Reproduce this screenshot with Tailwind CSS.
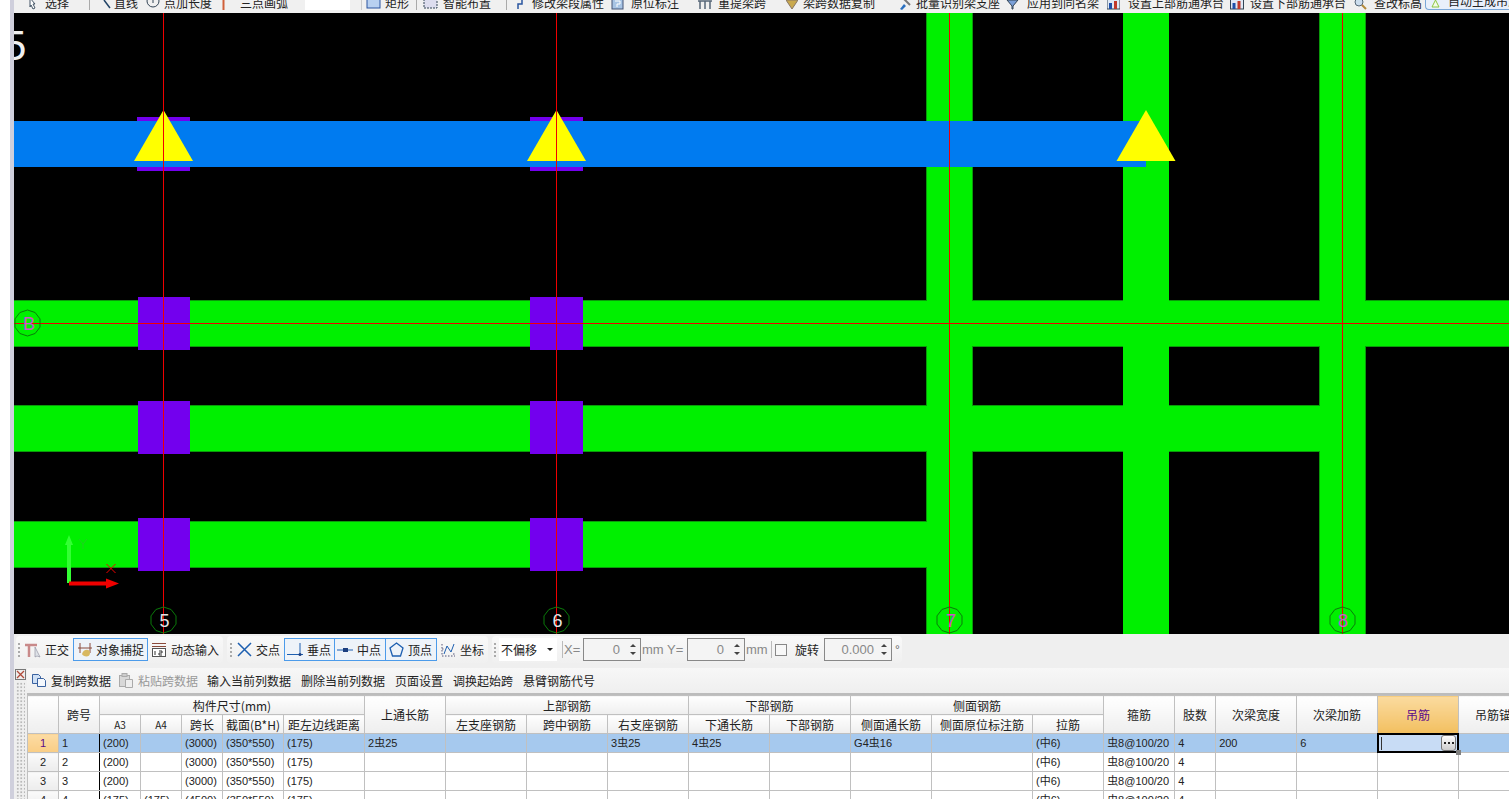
<!DOCTYPE html>
<html>
    <head>
        <meta charset="UTF-8" />
        <script src="https://cdn.jsdelivr.net/npm/@tailwindcss/browser@4"></script>
        <title>梁平法表格</title>
    </head>
    <body class="bg-white">
        <div class="flex h-[799px] w-[1509px] overflow-hidden font-['Noto_Sans_CJK_SC',sans-serif] text-[12px] leading-[14px] text-[#222]">
            <div class="w-[10px] shrink-0 bg-white"></div>
            <div class="w-[4px] shrink-0 bg-[#cfcfdc]"></div>

            <div class="flex min-w-0 flex-1 flex-col">
                <!-- top toolbar, cut off by the window -->
                <div class="flex h-[13px] shrink-0 items-end overflow-hidden whitespace-nowrap bg-[#f0f0f0] pb-[3px]">
                    <svg class="ml-[15px] w-[8px] h-[12px] shrink-0" viewBox="0 0 8 12"><path d="M1 0l5 6-2 0 2 4-2 1-2-4-1 2z" fill="#fff" stroke="#456" /></svg>
                    <span class="ml-[8px] w-[24px] shrink-0">选择</span>
                    <i class="ml-[20px] h-[12px] w-[1px] shrink-0 bg-[#aaa]"></i>
                    <svg class="ml-[13px] w-[8px] h-[12px] shrink-0" viewBox="0 0 8 12"><path d="M1 2l6 8" stroke="#246" stroke-width="1.5" /></svg>
                    <span class="ml-[3px] w-[24px] shrink-0">直线</span>
                    <svg class="ml-[8px] w-[14px] h-[14px] shrink-0" viewBox="0 0 14 14"><circle cx="7" cy="5" r="6" fill="none" stroke="#345" /><path d="M7 1v6" stroke="#345" /></svg>
                    <span class="ml-[4px] w-[48px] shrink-0">点加长度</span>
                    <svg class="ml-[9px] w-[5px] h-[10px] shrink-0" viewBox="0 0 5 10"><path d="M2.5 0v10" stroke="#d0603a" stroke-width="2" /></svg>
                    <span class="ml-[14px] w-[48px] shrink-0">三点画弧</span>
                    <i class="ml-[17px] h-[13px] w-[45px] shrink-0 bg-white"></i>
                    <i class="ml-[11px] h-[12px] w-[1px] shrink-0 bg-[#ccc]"></i>
                    <svg class="ml-[4px] w-[15px] h-[12px] shrink-0" viewBox="0 0 15 12"><rect x="1" y="1" width="13" height="9" fill="#b8d0f0" stroke="#2a55a0" /></svg>
                    <span class="ml-[4px] w-[24px] shrink-0">矩形</span>
                    <i class="ml-[7px] h-[12px] w-[1px] shrink-0 bg-[#aaa]"></i>
                    <svg class="ml-[6px] w-[15px] h-[12px] shrink-0" viewBox="0 0 15 12"><rect x="1" y="1" width="13" height="9" fill="#dde" stroke="#345" stroke-dasharray="2 1" /></svg>
                    <span class="ml-[5px] w-[48px] shrink-0">智能布置</span>
                    <i class="ml-[15px] h-[12px] w-[1px] shrink-0 bg-[#aaa]"></i>
                    <svg class="ml-[7px] w-[10px] h-[12px] shrink-0" viewBox="0 0 10 12"><path d="M2 1h6v5H4v5" fill="none" stroke="#2a55a0" stroke-width="1.5" /></svg>
                    <span class="ml-[8px] w-[72px] shrink-0">修改梁段属性</span>
                    <svg class="ml-[7px] w-[13px] h-[12px] shrink-0" viewBox="0 0 13 12"><rect x="1" y="0" width="11" height="11" fill="#a8c4e4" stroke="#457" /><path d="M4 3h5v3H6v3" fill="none" stroke="#fff" /></svg>
                    <span class="ml-[7px] w-[48px] shrink-0">原位标注</span>
                    <svg class="ml-[18px] w-[16px] h-[12px] shrink-0" viewBox="0 0 16 12"><path d="M1 3h14M3 3v8M8 3v8M13 3v8" fill="none" stroke="#567" stroke-width="1.5" /></svg>
                    <span class="ml-[5px] w-[48px] shrink-0">重提梁跨</span>
                    <svg class="ml-[20px] w-[12px] h-[12px] shrink-0" viewBox="0 0 12 12"><path d="M0 2h12L6 11z" fill="#c9a94e" stroke="#876" /></svg>
                    <span class="ml-[5px] w-[72px] shrink-0">梁跨数据复制</span>
                    <svg class="ml-[23px] w-[13px] h-[12px] shrink-0" viewBox="0 0 13 12"><path d="M2 11l4-5 2 2-4 4z" fill="#2a70c0" /><path d="M6 1l6 6" stroke="#777" stroke-width="2" /></svg>
                    <span class="ml-[5px] w-[84px] shrink-0">批量识别梁支座</span>
                    <svg class="ml-[6px] w-[13px] h-[12px] shrink-0" viewBox="0 0 13 12"><path d="M1 2h11L7 8v3H6V8z" fill="#7aa0d8" stroke="#345" /></svg>
                    <span class="ml-[8px] w-[72px] shrink-0">应用到同名梁</span>
                    <svg class="ml-[8px] w-[13px] h-[12px] shrink-0" viewBox="0 0 13 12"><rect x="0" y="0" width="13" height="11" fill="#dfe8f5" stroke="#345" /><rect x="2" y="5" width="3" height="6" fill="#1d4fa8" /><rect x="7" y="3" width="3" height="8" fill="#c0392b" /></svg>
                    <span class="ml-[8px] w-[96px] shrink-0">设置上部筋通承台</span>
                    <svg class="ml-[6px] w-[14px] h-[12px] shrink-0" viewBox="0 0 13 12"><rect x="0" y="0" width="13" height="11" fill="#dfe8f5" stroke="#345" /><rect x="2" y="5" width="3" height="6" fill="#1d4fa8" /><rect x="7" y="3" width="3" height="8" fill="#c0392b" /></svg>
                    <span class="ml-[6px] w-[96px] shrink-0">设置下部筋通承台</span>
                    <svg class="ml-[8px] w-[13px] h-[12px] shrink-0" viewBox="0 0 13 12"><circle cx="5" cy="4" r="4" fill="#cde" stroke="#567" /><path d="M8 7l4 4" stroke="#b58a3a" stroke-width="2" /></svg>
                    <span class="ml-[7px] w-[48px] shrink-0">查改标高</span>
                    <div class="ml-[3px] flex h-[10px] flex-1 items-end rounded-bl-sm border-b border-l border-[#7aa8d8] bg-[#e8f0fb] pb-[1px] pl-[5px]">
                        <svg class="w-[9px] h-[9px] shrink-0" viewBox="0 0 9 9"><path d="M4.5 1L8 8H1z" fill="#f4fbe8" stroke="#8cc63f" /></svg>
                        <span class="ml-[8px]">自动生成吊筋</span>
                    </div>
                </div>

                <!-- CAD drawing -->
                <svg class="h-[621px] w-[1495px] shrink-0 bg-black" viewBox="14 13 1495 621" shape-rendering="crispEdges">
                    <g fill="#00f000" stroke="#0a9a0a">
                        <rect x="926.5" y="0" width="46" height="700" />
                        <rect x="1319.5" y="0" width="46" height="700" />
                        <rect x="0" y="300.5" width="1600" height="46" />
                        <rect x="0" y="405.5" width="1320" height="46" />
                        <rect x="0" y="521.5" width="926" height="46" />
                    </g>
                    <g fill="#00f000">
                        <rect x="1123" y="13" width="46" height="621" />
                        <rect x="927" y="13" width="45" height="621" />
                        <rect x="1320" y="13" width="45" height="621" />
                        <rect x="14" y="301" width="1495" height="45" />
                        <rect x="14" y="406" width="1306" height="45" />
                        <rect x="14" y="522" width="913" height="45" />
                    </g>
                    <g fill="#7300ee">
                        <rect x="137" y="117" width="53" height="54" />
                        <rect x="530" y="117" width="53" height="54" />
                        <rect x="138" y="297" width="52" height="53" />
                        <rect x="530" y="297" width="53" height="53" />
                        <rect x="138" y="401" width="52" height="53" />
                        <rect x="530" y="401" width="53" height="53" />
                        <rect x="138" y="518" width="52" height="53" />
                        <rect x="530" y="518" width="53" height="53" />
                    </g>
                    <rect x="0" y="121" width="1146" height="46" fill="#007bf0" />
                    <g fill="#ffff00" shape-rendering="auto">
                        <path d="M163.5 110L193 161H134z" />
                        <path d="M556.5 110L586 161H527z" />
                        <path d="M1146 110L1175.500 161H1116.500z" />
                    </g>
                    <g stroke="#f00000" stroke-width="1">
                        <path d="M163.500 13V634M556.500 13V634M949.500 13V634M1342.500 13V634M14 323.500H1509" />
                    </g>
                    <g fill="none" stroke="#0a7a0a" shape-rendering="auto">
                        <path d="M163.500 607l7.600 2.500 4.900 6.400v8.200l-4.900 6.400-7.600 2.500-7.600-2.500-4.900-6.400v-8.200l4.900-6.400z" />
                        <path d="M556.500 607l7.600 2.500 4.900 6.400v8.200l-4.900 6.400-7.600 2.500-7.600-2.500-4.900-6.400v-8.200l4.900-6.400z" />
                        <path d="M949.500 607l7.600 2.500 4.900 6.400v8.200l-4.900 6.400-7.600 2.500-7.600-2.500-4.900-6.400v-8.200l4.900-6.400z" />
                        <path d="M1342.500 607l7.600 2.500 4.900 6.400v8.200l-4.900 6.400-7.600 2.500-7.600-2.500-4.900-6.400v-8.200l4.900-6.400z" />
                        <path d="M27.500 310l7.600 2.500 4.900 6.400v8.200l-4.900 6.400-7.600 2.500-7.600-2.500-4.900-6.400v-8.200l4.900-6.400z" />
                    </g>
                    <g font-family="'Liberation Sans',sans-serif" font-size="18" text-anchor="middle" shape-rendering="auto">
                        <text x="164.500" y="627" fill="#e4e4e4">5</text>
                        <text x="557.500" y="627" fill="#e4e4e4">6</text>
                        <text x="951" y="627" fill="#cc55cc">7</text>
                        <text x="1343" y="627" fill="#cc55cc">8</text>
                        <text x="29" y="330" fill="#cc55cc">B</text>
                    </g>
                    <text x="3" y="60" font-family="'Liberation Sans',sans-serif" font-size="42" fill="#f0f0f0">5</text>
                    <g shape-rendering="auto">
                        <path d="M69 583V545" stroke="#33ff33" stroke-width="4" />
                        <path d="M69 535l4 10h-8z" fill="#33ff33" />
                        <path d="M79 539l4 5 4-5M83 544v5" fill="none" stroke="#20d020" />
                        <path d="M69 583.500H107" stroke="#f00000" stroke-width="4" />
                        <path d="M119 583.500l-13 -5v10z" fill="#f00000" />
                        <path d="M106.500 564l9 9M115.500 564l-9 9" stroke="#f00000" />
                    </g>
                </svg>

                <!-- snap toolbars -->
                <div class="flex h-[34px] shrink-0 items-start whitespace-nowrap bg-[#efefef] pt-[2px] pl-[2px]">
                    <div class="flex h-[27px] w-[207px] shrink-0 items-center rounded bg-gradient-to-b from-[#f9f9f9] to-[#f0f0f0] pl-[2px]">
                        <i class="h-[14px] w-[2px] shrink-0 border-l-2 border-dotted border-[#aaa]"></i>
                        <svg class="ml-[5px] w-[16px] h-[16px] shrink-0" viewBox="0 0 16 16"><path d="M0 3h12M4 3v12" fill="none" stroke="#c98a8a" stroke-width="2.500" /><path d="M10 5l5 10-3-1-2 1z" fill="#dfe3e8" stroke="#889" stroke-width="0.600" /></svg>
                        <span class="ml-[4px] w-[24px] shrink-0">正交</span>
                        <div class="ml-[4px] flex h-[23px] w-[75px] shrink-0 items-center border border-[#4c9bea] bg-[#eef3f9] pl-[3px]">
                            <svg class="w-[16px] h-[16px] shrink-0" viewBox="0 0 16 16"><path d="M3 1v10M13 1v10M1 6h14" stroke="#8a4a3a" stroke-width="1" /><path d="M5 12c1-5 8-6 8-1s-7 4-8 1z" fill="#d8b860" /></svg>
                            <span class="ml-[3px] shrink-0">对象捕捉</span>
                        </div>
                        <svg class="ml-[3px] w-[16px] h-[16px] shrink-0" viewBox="0 0 16 16"><path d="M1 1.500h14M1 4.500h14" stroke="#8a4a3a" /><rect x="1.500" y="6.500" width="13" height="8" fill="#fff" stroke="#555" /><path d="M4 9v4M8 9h3v2H8v2h3" stroke="#333" fill="none" /></svg>
                        <span class="ml-[4px] shrink-0">动态输入</span>
                    </div>
                    <div class="ml-[4px] flex h-[27px] w-[261px] shrink-0 items-center rounded bg-gradient-to-b from-[#f9f9f9] to-[#f0f0f0] pl-[3px]">
                        <i class="h-[14px] w-[2px] shrink-0 border-l-2 border-dotted border-[#aaa]"></i>
                        <svg class="ml-[5px] w-[15px] h-[15px] shrink-0" viewBox="0 0 15 15"><path d="M1 1l13 13M14 1L1 14" stroke="#1d5fb0" stroke-width="1.500" /></svg>
                        <span class="ml-[4px] w-[24px] shrink-0">交点</span>
                        <div class="ml-[4px] flex h-[23px] w-[51px] shrink-0 items-center border border-[#4c9bea] bg-[#eef3f9] pl-[2px]">
                            <svg class="w-[16px] h-[16px] shrink-0" viewBox="0 0 16 16"><path d="M0 12.500h16M13 1v12" stroke="#1d5fb0" /><circle cx="13" cy="12.500" r="1.500" fill="#1d3f80" /></svg>
                            <span class="ml-[4px] shrink-0">垂点</span>
                        </div>
                        <div class="flex h-[23px] w-[51px] shrink-0 items-center border border-l-0 border-[#4c9bea] bg-[#eef3f9] pl-[2px]">
                            <svg class="w-[16px] h-[16px] shrink-0" viewBox="0 0 16 16"><path d="M0 8h16" stroke="#1d5fb0" /><rect x="6" y="6" width="5" height="4" fill="#1d3f80" /></svg>
                            <span class="ml-[4px] shrink-0">中点</span>
                        </div>
                        <div class="flex h-[23px] w-[51px] shrink-0 items-center border border-l-0 border-[#4c9bea] bg-[#eef3f9] pl-[3px]">
                            <svg class="w-[15px] h-[15px] shrink-0" viewBox="0 0 15 15"><path d="M7.500 1L14 6l-2.500 8h-8L1 6z" fill="none" stroke="#1d5fb0" stroke-width="1.300" /></svg>
                            <span class="ml-[4px] shrink-0">顶点</span>
                        </div>
                        <svg class="ml-[4px] w-[15px] h-[15px] shrink-0" viewBox="0 0 15 15"><path d="M3 12l3-8 4 6 3-8" fill="none" stroke="#1d5fb0" /><path d="M1 2v12h13M1 7h3M12 12h2" fill="none" stroke="#557" stroke-dasharray="1.500 1.500" /></svg>
                        <span class="ml-[4px] shrink-0">坐标</span>
                    </div>
                    <div class="ml-[4px] flex h-[27px] w-[410px] shrink-0 items-center rounded bg-gradient-to-b from-[#f9f9f9] to-[#f0f0f0] pl-[2px]">
                        <i class="h-[14px] w-[2px] shrink-0 border-l-2 border-dotted border-[#aaa]"></i>
                        <div class="ml-[3px] flex h-[23px] w-[58px] shrink-0 items-center justify-between bg-white pl-[2px] pr-[4px]">
                            <span>不偏移</span>
                            <i class="h-0 w-0 border-x-[3px] border-t-[3px] border-x-transparent border-t-[#222]"></i>
                        </div>
                        <i class="ml-[5px] h-[17px] w-[1px] shrink-0 bg-[#bbb]"></i>
                        <span class="ml-[1px] w-[18px] shrink-0 font-['Liberation_Sans',sans-serif] text-[13px] text-[#888]">X=</span>
                        <div class="ml-[1px] flex h-[23px] w-[58px] shrink-0 items-center justify-end border border-[#888] bg-[#f4f4f4] font-['Liberation_Sans',sans-serif] text-[13px] text-[#888]">
                            <span>0</span>
                            <div class="ml-[8px] mr-[2px] flex w-[10px] flex-col items-center gap-[5px]">
                                <i class="h-0 w-0 border-x-[3px] border-b-[3px] border-x-transparent border-b-[#444]"></i>
                                <i class="h-0 w-0 border-x-[3px] border-t-[3px] border-x-transparent border-t-[#444]"></i>
                            </div>
                        </div>
                        <span class="ml-[1px] w-[25px] shrink-0 font-['Liberation_Sans',sans-serif] text-[13px] text-[#888]">mm</span>
                        <span class="w-[20px] shrink-0 font-['Liberation_Sans',sans-serif] text-[13px] text-[#888]">Y=</span>
                        <div class="flex h-[23px] w-[58px] shrink-0 items-center justify-end border border-[#888] bg-[#f4f4f4] font-['Liberation_Sans',sans-serif] text-[13px] text-[#888]">
                            <span>0</span>
                            <div class="ml-[8px] mr-[2px] flex w-[10px] flex-col items-center gap-[5px]">
                                <i class="h-0 w-0 border-x-[3px] border-b-[3px] border-x-transparent border-b-[#444]"></i>
                                <i class="h-0 w-0 border-x-[3px] border-t-[3px] border-x-transparent border-t-[#444]"></i>
                            </div>
                        </div>
                        <span class="ml-[1px] w-[25px] shrink-0 font-['Liberation_Sans',sans-serif] text-[13px] text-[#888]">mm</span>
                        <i class="h-[17px] w-[1px] shrink-0 bg-[#bbb]"></i>
                        <i class="ml-[3px] h-[12px] w-[12px] shrink-0 border border-[#888] bg-[#f8f8f8]"></i>
                        <span class="ml-[8px] w-[24px] shrink-0">旋转</span>
                        <div class="ml-[5px] flex h-[23px] w-[68px] shrink-0 items-center justify-end border border-[#888] bg-[#f4f4f4] font-['Liberation_Sans',sans-serif] text-[13px] text-[#888]">
                            <span>0.000</span>
                            <div class="ml-[5px] mr-[2px] flex w-[10px] flex-col items-center gap-[5px]">
                                <i class="h-0 w-0 border-x-[3px] border-b-[3px] border-x-transparent border-b-[#444]"></i>
                                <i class="h-0 w-0 border-x-[3px] border-t-[3px] border-x-transparent border-t-[#444]"></i>
                            </div>
                        </div>
                        <span class="ml-[3px] font-['Liberation_Sans',sans-serif] text-[12px] text-[#666]">°</span>
                    </div>
                </div>

                <!-- bottom panel -->
                <div class="flex min-h-0 flex-1 bg-[#efefef]">
                    <div class="flex w-[13px] shrink-0 flex-col items-center pt-[1px]">
                        <svg class="w-[11px] h-[11px] shrink-0" viewBox="0 0 11 11"><rect x="0.500" y="0.500" width="10" height="10" fill="#eee" stroke="#777" /><path d="M2 2l7 7M9 2l-7 7" stroke="#b04a3a" stroke-width="1.300" /></svg>
                        <div class="mt-[2px] w-[9px] flex-1 bg-[radial-gradient(#b8b8b8_1px,transparent_1px)] bg-[length:3.500px_3.500px]"></div>
                    </div>
                    <div class="flex min-w-0 flex-1 flex-col">
                        <div class="flex h-[25px] shrink-0 items-center whitespace-nowrap bg-gradient-to-b from-[#f7f7f7] to-[#efefef] pl-[4px]">
                            <svg class="w-[16px] h-[15px] shrink-0" viewBox="0 0 16 15"><path d="M1.500 1.500h6l2 2v7h-8z" fill="#cfe0f5" stroke="#3a62a0" /><path d="M6.500 5.500h6l2 2v6h-8z" fill="#f4f8fd" stroke="#3a62a0" /></svg>
                            <span class="ml-[4px] w-[60px] shrink-0">复制跨数据</span>
                            <svg class="ml-[7px] w-[16px] h-[15px] shrink-0" viewBox="0 0 16 15"><rect x="1.500" y="2.500" width="10" height="11" fill="#d8d8d8" stroke="#aaa" /><rect x="4" y="0.500" width="5" height="3" fill="#ccc" stroke="#aaa" /><path d="M7.500 6.500h7v8h-7z" fill="#eee" stroke="#aaa" /></svg>
                            <span class="ml-[4px] w-[60px] shrink-0 text-[#999]">粘贴跨数据</span>
                            <span class="ml-[9px] w-[84px] shrink-0">输入当前列数据</span>
                            <span class="ml-[10px] w-[84px] shrink-0">删除当前列数据</span>
                            <span class="ml-[10px] w-[48px] shrink-0">页面设置</span>
                            <span class="ml-[10px] w-[60px] shrink-0">调换起始跨</span>
                            <span class="ml-[10px] w-[72px] shrink-0">悬臂钢筋代号</span>
                        </div>
                        <div class="min-h-0 flex-1 overflow-hidden border-t-2 border-[#bcbcbc] bg-white">
                            <table class="w-[1512px] table-fixed border-collapse leading-[17px] [&_td]:h-[19px] [&_td]:overflow-hidden [&_td]:whitespace-nowrap [&_td]:border [&_td]:border-[#c0c0c0] [&_td]:p-0 [&_td]:pl-[3px] [&_td]:font-['Liberation_Sans','Noto_Sans_CJK_SC',sans-serif] [&_td]:text-[11px] [&_th]:h-[19px] [&_th]:overflow-hidden [&_th]:whitespace-nowrap [&_th]:border [&_th]:border-[#c0c0c0] [&_th]:bg-gradient-to-b [&_th]:from-white [&_th]:to-[#eeeeee] [&_th]:p-0 [&_th]:text-[12px] [&_th]:font-normal">
                                <colgroup>
                                    <col class="w-[31px]" /><col class="w-[41px]" /><col class="w-[41px]" /><col class="w-[41px]" /><col class="w-[41px]" /><col class="w-[61px]" /><col class="w-[81px]" /><col class="w-[81px]" />
                                    <col class="w-[81px]" /><col class="w-[81px]" /><col class="w-[81px]" /><col class="w-[81px]" /><col class="w-[81px]" /><col class="w-[81px]" /><col class="w-[101px]" /><col class="w-[71px]" />
                                    <col class="w-[71px]" /><col class="w-[41px]" /><col class="w-[81px]" /><col class="w-[81px]" /><col class="w-[81px]" /><col class="w-[81px]" />
                                </colgroup>
                                <thead>
                                    <tr>
                                        <th rowspan="2"></th>
                                        <th rowspan="2">跨号</th>
                                        <th colspan="5">构件尺寸(mm)</th>
                                        <th rowspan="2">上通长筋</th>
                                        <th colspan="3">上部钢筋</th>
                                        <th colspan="2">下部钢筋</th>
                                        <th colspan="3">侧面钢筋</th>
                                        <th rowspan="2">箍筋</th>
                                        <th rowspan="2">肢数</th>
                                        <th rowspan="2">次梁宽度</th>
                                        <th rowspan="2">次梁加筋</th>
                                        <th rowspan="2" class="!from-[#fbdb9f] !to-[#f2bf5e] text-[#5a0a8a]">吊筋</th>
                                        <th rowspan="2">吊筋锚固</th>
                                    </tr>
                                    <tr>
                                        <th class="!text-[10px]">A3</th>
                                        <th class="!text-[10px]">A4</th>
                                        <th>跨长</th>
                                        <th>截面(B*H)</th>
                                        <th>距左边线距离</th>
                                        <th>左支座钢筋</th>
                                        <th>跨中钢筋</th>
                                        <th>右支座钢筋</th>
                                        <th>下通长筋</th>
                                        <th>下部钢筋</th>
                                        <th>侧面通长筋</th>
                                        <th>侧面原位标注筋</th>
                                        <th>拉筋</th>
                                    </tr>
                                </thead>
                                <tbody>
                                    <tr class="bg-[#a6c9ee]">
                                        <td class="bg-gradient-to-b from-[#fcdca4] to-[#f9cd85] !pl-0 text-center text-[#5a0a8a]">1</td>
                                        <td class="border-r-2 !border-r-black">1</td>
                                        <td>(200)</td><td></td><td>(3000)</td><td>(350*550)</td><td>(175)</td>
                                        <td>2虫25</td><td></td><td></td><td>3虫25</td><td>4虫25</td><td></td><td>G4虫16</td><td></td>
                                        <td>(中6)</td><td>虫8@100/20</td><td>4</td><td>200</td><td>6</td>
                                        <td class="relative !overflow-visible">
                                            <div class="absolute -inset-[1px] flex items-center justify-between border-2 border-black bg-[#c8dcf5] pl-[2px] pr-[1px]">
                                                <i class="h-[13px] w-[1px] bg-[#333]"></i>
                                                <div class="flex h-[16px] w-[15px] items-center justify-center gap-[2px] rounded-[3px] border border-[#777] bg-gradient-to-b from-white to-[#ccc]">
                                                    <i class="h-[2px] w-[2px] bg-[#222]"></i><i class="h-[2px] w-[2px] bg-[#222]"></i><i class="h-[2px] w-[2px] bg-[#222]"></i>
                                                </div>
                                                <i class="absolute -right-[4px] -bottom-[4px] h-[5px] w-[5px] bg-[#808080]"></i>
                                            </div>
                                        </td>
                                        <td></td>
                                    </tr>
                                    <tr>
                                        <td class="bg-gradient-to-b from-[#fafafa] to-[#ececec] !pl-0 text-center">2</td>
                                        <td class="border-r-2 !border-r-black">2</td>
                                        <td>(200)</td><td></td><td>(3000)</td><td>(350*550)</td><td>(175)</td>
                                        <td></td><td></td><td></td><td></td><td></td><td></td><td></td><td></td>
                                        <td>(中6)</td><td>虫8@100/20</td><td>4</td><td></td><td></td><td></td><td></td>
                                    </tr>
                                    <tr>
                                        <td class="bg-gradient-to-b from-[#fafafa] to-[#ececec] !pl-0 text-center">3</td>
                                        <td class="border-r-2 !border-r-black">3</td>
                                        <td>(200)</td><td></td><td>(3000)</td><td>(350*550)</td><td>(175)</td>
                                        <td></td><td></td><td></td><td></td><td></td><td></td><td></td><td></td>
                                        <td>(中6)</td><td>虫8@100/20</td><td>4</td><td></td><td></td><td></td><td></td>
                                    </tr>
                                    <tr>
                                        <td class="bg-gradient-to-b from-[#fafafa] to-[#ececec] !pl-0 text-center">4</td>
                                        <td class="border-r-2 !border-r-black">4</td>
                                        <td>(175)</td><td>(175)</td><td>(4500)</td><td>(350*550)</td><td>(175)</td>
                                        <td></td><td></td><td></td><td></td><td></td><td></td><td></td><td></td>
                                        <td>(中6)</td><td>虫8@100/20</td><td>4</td><td></td><td></td><td></td><td></td>
                                    </tr>
                                </tbody>
                            </table>
                        </div>
                    </div>
                </div>
            </div>
        </div>
    </body>
</html>
